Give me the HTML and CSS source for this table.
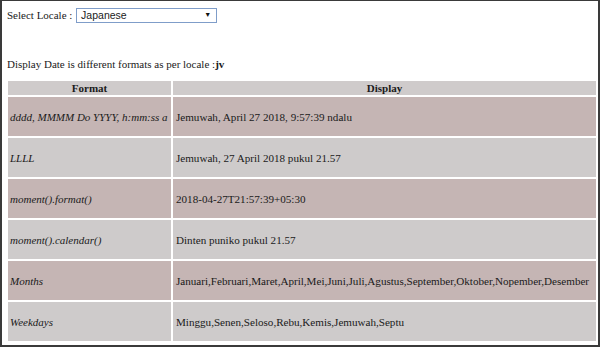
FILE: index.html
```html
<!DOCTYPE html>
<html>
<head>
<meta charset="utf-8">
<link rel="stylesheet" href="styles.css">
</head>
<body>
<div class="frame">
  <div class="locale-row">
    <span class="label">Select Locale : </span>
    <span class="select"><span class="select-text">Japanese</span><span class="arrow">&#9660;</span></span>
  </div>
  <div class="display-line">Display Date is different formats as per locale :<b>jv</b></div>
  <table class="dates">
    <thead>
      <tr><th class="c1">Format</th><th class="c2">Display</th></tr>
    </thead>
    <tbody>
      <tr class="odd"><td class="fmt">dddd, MMMM Do YYYY, h:mm:ss a</td><td class="val">Jemuwah, April 27 2018, 9:57:39 ndalu</td></tr>
      <tr class="even"><td class="fmt">LLLL</td><td class="val">Jemuwah, 27 April 2018 pukul 21.57</td></tr>
      <tr class="odd"><td class="fmt">moment().format()</td><td class="val">2018-04-27T21:57:39+05:30</td></tr>
      <tr class="even"><td class="fmt">moment().calendar()</td><td class="val">Dinten puniko pukul 21.57</td></tr>
      <tr class="odd"><td class="fmt">Months</td><td class="val">Januari,Februari,Maret,April,Mei,Juni,Juli,Agustus,September,Oktober,Nopember,Desember</td></tr>
      <tr class="even"><td class="fmt">Weekdays</td><td class="val">Minggu,Senen,Seloso,Rebu,Kemis,Jemuwah,Septu</td></tr>
    </tbody>
  </table>
</div>
</body>
</html>
```
FILE: styles.css
```css
html, body {
  margin: 0;
  padding: 0;
  background: #ffffff;
}
.frame {
  box-sizing: border-box;
  width: 600px;
  height: 347px;
  border: 2px solid #3a3a3a;
  border-top-width: 1px;
  padding: 0 1px 0 2px;
  font-family: "Liberation Serif", "Times New Roman", serif;
  font-size: 11px;
  color: #1a1a1a;
  overflow: hidden;
}
.locale-row {
  padding: 6px 0 0 3px;
  height: 16px;
  line-height: 16px;
  display: flex;
  align-items: center;
}
.label {
  white-space: pre;
  font-size: 11px;
}
.select {
  display: inline-flex;
  align-items: center;
  justify-content: space-between;
  box-sizing: border-box;
  width: 141px;
  height: 15px;
  margin-left: 1px;
  border: 1px solid #7f9dc9;
  background: #fff;
  font-family: "Liberation Sans", Arial, sans-serif;
  font-size: 10.5px;
  padding: 0 5px 0 4px;
}
.arrow {
  font-size: 7px;
  color: #111;
}
.display-line {
  margin-top: 33px;
  padding-left: 3px;
  line-height: 16px;
}
.dates {
  margin-top: 7px;
  width: 592px;
  margin-left: 2px;
  border-spacing: 2px;
  table-layout: fixed;
  font-family: "Liberation Serif", "Times New Roman", serif;
  font-size: 11px;
}
.dates th {
  height: 14px;
  padding: 0;
  line-height: 14px;
  background: #cfcbcb;
  font-weight: bold;
  text-align: center;
}
.dates th.c1 {
  width: 163px;
}
.dates td {
  height: 39px;
  padding: 0 0 0 3px;
  vertical-align: middle;
  white-space: nowrap;
}
.dates td.val {
  font-size: 11.1px;
}
.dates td.fmt {
  font-style: italic;
  font-size: 11px;
  padding-left: 2px;
}
.odd td {
  background: #c5b5b4;
}
.even td {
  background: #cecbcb;
}
```
